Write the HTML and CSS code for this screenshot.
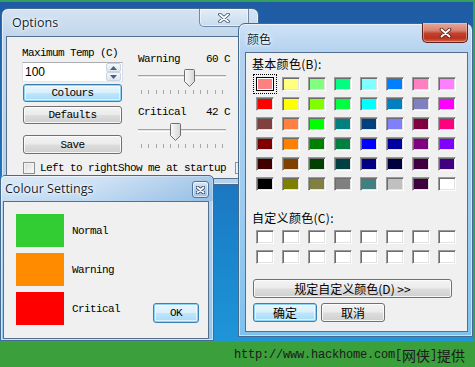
FILE: index.html
```html
<!DOCTYPE html>
<html>
<head>
<meta charset="utf-8">
<title>Options</title>
<link rel="stylesheet" href="styles.css">
</head>
<body>
<div class="screen">
  <div class="desk">

    <section class="win win-options">
      <header class="titlebar tb-options">
        <span class="title">Options</span>
        <span class="close close-inactive">
          <svg width="12" height="10" viewBox="0 0 12 10"><path d="M2,1.5 L10,8.5 M10,1.5 L2,8.5" class="x-out"/><path d="M2,1.5 L10,8.5 M10,1.5 L2,8.5" class="x-in"/></svg>
        </span>
      </header>
      <div class="client opt-client">
        <div class="opt-left">
          <div class="mono lbl">Maximum Temp (C)</div>
          <div class="spin">
            <span class="spin-val">100</span>
            <span class="spin-btns">
              <span class="spin-b"><svg width="7" height="4" viewBox="0 0 7 4"><path d="M0,4 L3.5,0 L7,4 Z" fill="#4b5f82"/></svg></span>
              <span class="spin-b"><svg width="7" height="4" viewBox="0 0 7 4"><path d="M0,0 L3.5,4 L7,0 Z" fill="#4b5f82"/></svg></span>
            </span>
          </div>
          <div class="btn btn-default mono b-colours">Colours</div>
          <div class="btn mono b-defaults">Defaults</div>
          <div class="btn mono b-save">Save</div>
        </div>
        <div class="opt-right">
          <div class="sl-head mono h-warn"><span>Warning</span><span>60 C</span></div>
          <div class="slider s-warn">
            <div class="track"></div>
            <svg class="thumb" style="left:46px" width="11" height="18" viewBox="0 0 11 18"><defs><linearGradient id="tg1" x1="0" y1="0" x2="1" y2="0"><stop offset="0" stop-color="#fbfbfb"/><stop offset="1" stop-color="#d6d6d6"/></linearGradient></defs><path d="M0.5,1.5 Q0.5,0.5 1.5,0.5 H9.5 Q10.5,0.5 10.5,1.5 V12.5 L5.5,17.5 L0.5,12.5 Z" fill="url(#tg1)" stroke="#6f6f6f"/></svg>
            <div class="ticks"><i></i><i></i><i></i><i></i><i></i><i></i><i></i><i></i><i></i><i></i><i></i><i></i></div>
          </div>
          <div class="sl-head mono h-crit"><span>Critical</span><span>42 C</span></div>
          <div class="slider s-crit">
            <div class="track"></div>
            <svg class="thumb" style="left:32px" width="11" height="18" viewBox="0 0 11 18"><defs><linearGradient id="tg2" x1="0" y1="0" x2="1" y2="0"><stop offset="0" stop-color="#fbfbfb"/><stop offset="1" stop-color="#d6d6d6"/></linearGradient></defs><path d="M0.5,1.5 Q0.5,0.5 1.5,0.5 H9.5 Q10.5,0.5 10.5,1.5 V12.5 L5.5,17.5 L0.5,12.5 Z" fill="url(#tg2)" stroke="#6f6f6f"/></svg>
            <div class="ticks"><i></i><i></i><i></i><i></i><i></i><i></i><i></i><i></i><i></i><i></i><i></i><i></i></div>
          </div>
        </div>
        <div class="chk-row">
          <span class="chk"></span>
          <span class="mono chk-text">Left to rightShow me at startup</span>
          <span class="chk chk2"></span>
        </div>
      </div>
    </section>

    <section class="win win-cs">
      <header class="titlebar tb-cs">
        <span class="title">Colour Settings</span>
        <span class="close close-small">
          <svg width="9" height="8" viewBox="0 0 9 8"><path d="M1.5,1.5 L7.5,6.5 M7.5,1.5 L1.5,6.5" class="x-out"/><path d="M1.5,1.5 L7.5,6.5 M7.5,1.5 L1.5,6.5" class="x-in"/></svg>
        </span>
      </header>
      <div class="client cs-client">
        <div class="cs-list">
          <div class="cs-row"><span class="cs-sw" style="background:#32cd32"></span><span class="mono">Normal</span></div>
          <div class="cs-row"><span class="cs-sw" style="background:#ff8c00"></span><span class="mono">Warning</span></div>
          <div class="cs-row"><span class="cs-sw" style="background:#ff0000"></span><span class="mono">Critical</span></div>
        </div>
        <div class="btn btn-default mono b-ok">OK</div>
      </div>
    </section>

    <section class="win win-dlg">
      <header class="titlebar tb-dlg">
        <span class="title cjk-title">颜色</span>
        <span class="close close-red">
          <svg width="13" height="10" viewBox="0 0 13 10"><path d="M2.5,1.5 L10.5,8.5 M10.5,1.5 L2.5,8.5" class="x-out x-out-red"/><path d="M2.5,1.5 L10.5,8.5 M10.5,1.5 L2.5,8.5" class="x-in"/></svg>
        </span>
      </header>
      <div class="client dlg-client">
        <div class="cjk dlg-lbl">基本颜色(<u>B</u>):</div>
        <div class="sw-grid">
          <span class="sw sel" style="background:#ff8080"></span>
          <span class="sw" style="background:#ffff80"></span>
          <span class="sw" style="background:#80ff80"></span>
          <span class="sw" style="background:#00ff80"></span>
          <span class="sw" style="background:#80ffff"></span>
          <span class="sw" style="background:#0080ff"></span>
          <span class="sw" style="background:#ff80c0"></span>
          <span class="sw" style="background:#ff80ff"></span>

          <span class="sw" style="background:#ff0000"></span>
          <span class="sw" style="background:#ffff00"></span>
          <span class="sw" style="background:#80ff00"></span>
          <span class="sw" style="background:#00ff40"></span>
          <span class="sw" style="background:#00ffff"></span>
          <span class="sw" style="background:#0080c0"></span>
          <span class="sw" style="background:#8080c0"></span>
          <span class="sw" style="background:#ff00ff"></span>

          <span class="sw" style="background:#804040"></span>
          <span class="sw" style="background:#ff8040"></span>
          <span class="sw" style="background:#00ff00"></span>
          <span class="sw" style="background:#008080"></span>
          <span class="sw" style="background:#004080"></span>
          <span class="sw" style="background:#8080ff"></span>
          <span class="sw" style="background:#800040"></span>
          <span class="sw" style="background:#ff0080"></span>

          <span class="sw" style="background:#800000"></span>
          <span class="sw" style="background:#ff8000"></span>
          <span class="sw" style="background:#008000"></span>
          <span class="sw" style="background:#008040"></span>
          <span class="sw" style="background:#0000ff"></span>
          <span class="sw" style="background:#0000a0"></span>
          <span class="sw" style="background:#800080"></span>
          <span class="sw" style="background:#8000ff"></span>

          <span class="sw" style="background:#400000"></span>
          <span class="sw" style="background:#804000"></span>
          <span class="sw" style="background:#004000"></span>
          <span class="sw" style="background:#004040"></span>
          <span class="sw" style="background:#000080"></span>
          <span class="sw" style="background:#000040"></span>
          <span class="sw" style="background:#400040"></span>
          <span class="sw" style="background:#400080"></span>

          <span class="sw" style="background:#000000"></span>
          <span class="sw" style="background:#808000"></span>
          <span class="sw" style="background:#808040"></span>
          <span class="sw" style="background:#808080"></span>
          <span class="sw" style="background:#408080"></span>
          <span class="sw" style="background:#c0c0c0"></span>
          <span class="sw" style="background:#400040"></span>
          <span class="sw" style="background:#ffffff"></span>
        </div>
        <div class="cjk dlg-lbl lbl2">自定义颜色(<u>C</u>):</div>
        <div class="sw-grid grid2">
          <span class="sw wh"></span><span class="sw wh"></span><span class="sw wh"></span><span class="sw wh"></span>
          <span class="sw wh"></span><span class="sw wh"></span><span class="sw wh"></span><span class="sw wh"></span>
          <span class="sw wh"></span><span class="sw wh"></span><span class="sw wh"></span><span class="sw wh"></span>
          <span class="sw wh"></span><span class="sw wh"></span><span class="sw wh"></span><span class="sw wh"></span>
        </div>
        <div class="btn cjk b-define">规定自定义颜色(<u>D</u>) &gt;&gt;</div>
        <div class="dlg-btns">
          <div class="btn btn-default cjk b-small">确定</div>
          <div class="btn cjk b-small">取消</div>
        </div>
      </div>
    </section>

  </div>
  <footer class="footer"><span class="wm-a">http://www.hackhome.com[</span><span class="wm-c">网侠</span><span class="wm-a">]</span><span class="wm-c">提供</span></footer>
</div>
</body>
</html>
```

FILE: styles.css
```css
* { box-sizing: border-box; }

body {
  margin: 0;
  width: 475px;
  height: 367px;
  overflow: hidden;
  font-family: "Open Sans", "Noto Sans", sans-serif;
  color: #000;
}

.screen {
  width: 475px;
  height: 367px;
  display: flex;
  flex-direction: column;
}

.desk {
  position: relative;
  height: 342px;
  overflow: hidden;
  background: linear-gradient(180deg, #1f5ba3 0%, #1d6db9 40%, #1a86cc 75%, #1f95d8 100%);
  box-shadow: inset 0 2px 0 #35a05e, inset -2px 0 0 #35a05e;
}

.footer {
  height: 25px;
  background: #3b9f3c;
  display: flex;
  justify-content: flex-end;
  align-items: center;
  padding-right: 10px;
  color: #1a1a1a;
}
.wm-a {
  font-family: "Liberation Mono", monospace;
  font-size: 12px;
  letter-spacing: -0.2px;
}
.wm-c {
  font-family: "Noto Sans CJK SC", sans-serif;
  font-size: 14px;
  line-height: 16px;
}

/* ---------- windows ---------- */
.win {
  position: absolute;
  display: flex;
  flex-direction: column;
  border: 1px solid #45698f;
  border-radius: 7px 7px 0 0;
  box-shadow: inset 0 0 0 1px rgba(255,255,255,0.55);
}

.win-options {
  left: 1px;
  top: 8px;
  width: 258px;
  height: 177px;
  padding: 0 5px 5px 4px;
  background: linear-gradient(180deg, #d4e3f2 0px, #c2d7ec 27px, #b8d0e9 100%);
}

.win-cs {
  left: 0;
  top: 175px;
  width: 214px;
  height: 166px;
  padding: 0 4px 3px 2px;
  border-radius: 5px 5px 0 0;
  background: linear-gradient(180deg, #cfe2f5 0px, #b5d3ef 24px, #93c6ee 100%);
}

.win-dlg {
  left: 238px;
  top: 23px;
  width: 235px;
  height: 314px;
  padding: 0 4px 4px 6px;
  background: linear-gradient(180deg, #cfe2f5 0px, #b4d2f0 28px, #9ccbef 60%, #7fc1ee 100%);
}

.titlebar {
  position: relative;
  display: flex;
  align-items: center;
  flex: none;
}
.tb-options { height: 27px; padding-left: 6px; }
.tb-cs {
  height: 25px;
  padding-left: 3px;
  margin: 0 -4px 0 -2px;
  padding-right: 4px;
  background: linear-gradient(90deg, rgba(255,255,255,0.25) 0%, rgba(255,255,255,0.1) 45%, rgba(60,130,200,0.25) 100%);
}
.tb-dlg { height: 28px; padding-left: 2px; }

.title {
  font-size: 12.5px;
  color: #0f1e30;
  text-shadow: 0 0 6px #fff, 0 0 3px #fff, 0 0 1px #fff;
  line-height: 16px;
}
.tb-cs .title { padding-left: 1px; }
.cjk-title {
  font-family: "Noto Sans CJK SC", sans-serif;
  font-size: 12px;
  padding-top: 2px;
}

.close {
  position: absolute;
  display: flex;
  align-items: center;
  justify-content: center;
}
.close-inactive {
  right: 4px;
  top: 0;
  width: 50px;
  height: 18px;
  border: 1px solid #6f8aa9;
  border-top: none;
  border-radius: 0 0 5px 5px;
  background: linear-gradient(180deg, rgba(255,255,255,0.35), rgba(200,220,240,0.3));
  box-shadow: inset 0 0 0 1px rgba(255,255,255,0.5);
}
.close-red {
  right: 0;
  top: -1px;
  width: 46px;
  height: 20px;
  border: 1px solid #5e2119;
  border-top: none;
  border-radius: 0 0 5px 5px;
  background: linear-gradient(180deg, #e7a99c 0%, #d8806f 40%, #c2412d 55%, #b9331f 80%, #d16445 100%);
  box-shadow: inset 0 0 0 1px rgba(255,210,200,0.45);
}
.close-small {
  right: 4px;
  top: 5px;
  width: 17px;
  height: 17px;
  border: 1px solid #50739b;
  border-radius: 3px;
  background: linear-gradient(180deg, #d9e9f8 0%, #b5d1ee 50%, #9dc1e6 100%);
  box-shadow: inset 0 0 0 1px rgba(255,255,255,0.6);
}
.x-out { stroke: #3d4e63; stroke-width: 3.6; stroke-linecap: round; fill: none; }
.x-out-red { stroke: #5a1c12; }
.x-in { stroke: #fff; stroke-width: 1.9; stroke-linecap: round; fill: none; }

.client {
  flex: 1;
  background: #f0f0f0;
  border: 1px solid #54708f;
}

/* ---------- text / controls ---------- */
.mono {
  font-family: "Liberation Mono", monospace;
  font-size: 11px;
  letter-spacing: -0.6px;
  line-height: 12px;
  color: #000;
}
.cjk {
  font-family: "Noto Sans CJK SC", sans-serif;
  font-size: 12px;
  color: #000;
}
.cjk u { text-decoration: none; }

.btn {
  display: flex;
  align-items: center;
  justify-content: center;
  border: 1px solid #707070;
  border-radius: 3px;
  background: linear-gradient(180deg, #f3f3f3 0%, #ebebeb 48%, #dddddd 52%, #cfcfcf 100%);
  box-shadow: inset 0 0 0 1px rgba(255,255,255,0.8);
}
.btn-default {
  border-color: #3c7fb1;
  box-shadow: inset 0 0 0 1px #8fd3f6, inset 0 0 0 2px rgba(255,255,255,0.6);
  background: linear-gradient(180deg, #eaf6fd 0%, #d9f0fc 48%, #bee6fd 52%, #a7d9f5 100%);
}

/* ---------- options ---------- */
.opt-client {
  display: grid;
  grid-template-columns: 101px 92px;
  grid-template-rows: auto auto;
  column-gap: 15px;
  align-content: start;
  padding: 10px 0 0 15px;
}
.opt-left { display: flex; flex-direction: column; }
.lbl { padding-left: 0; }
.spin {
  margin-top: 3px;
  height: 20px;
  width: 101px;
  display: flex;
  align-items: center;
  justify-content: space-between;
  background: #fff;
  border: 1px solid #abadb3;
  border-color: #abadb3 #dbdfe6 #e3e9ef #e2e3ea;
  padding: 0 1px 0 2px;
}
.spin-val {
  font-family: "Liberation Sans", sans-serif;
  font-size: 12px;
}
.spin-btns { display: flex; flex-direction: column; gap: 0; }
.spin-b {
  width: 15px;
  height: 9px;
  display: flex;
  align-items: center;
  justify-content: center;
  border: 1px solid #c9d3e2;
  border-radius: 2px;
  background: linear-gradient(180deg, #f6f8fb, #dfe6ef);
}
.opt-left .btn { margin: 0 1px; }
.b-colours { margin-top: 2px !important; height: 18px; }
.b-defaults { margin-top: 4px !important; height: 18px; }
.b-save { margin-top: 11px !important; height: 19px; }

.opt-right { display: flex; flex-direction: column; }
.sl-head { display: flex; justify-content: space-between; }
.h-warn { margin-top: 6px; }
.h-crit { margin-top: 9px; }
.slider {
  position: relative;
  height: 28px;
  width: 88px;
  margin-top: 4px;
}
.s-crit { margin-top: 5px; }
.track {
  position: absolute;
  left: 0;
  right: 0;
  top: 6px;
  height: 3px;
  border-top: 1px solid #a3a3a3;
  border-bottom: 1px solid #fff;
  background: #e3e3e3;
}
.thumb { position: absolute; top: 0; }
.s-crit .thumb { top: 0; }
.ticks {
  position: absolute;
  left: 3px;
  right: 3px;
  top: 21px;
  height: 4px;
  display: flex;
  justify-content: space-between;
}
.ticks i {
  width: 1px;
  height: 4px;
  background: #a8a8a8;
}

.chk-row {
  grid-column: 1 / -1;
  display: flex;
  align-items: center;
  margin-top: 8px;
  padding-left: 1px;
}
.chk {
  width: 12px;
  height: 12px;
  border: 1px solid #8e8f8f;
  background: linear-gradient(135deg, #dcdcdc, #fbfbfb);
  box-shadow: inset 0 0 0 1px #f4f4f4;
  flex: none;
}
.chk-text { margin-left: 5px; white-space: nowrap; }
.chk2 { margin-left: 9px; }

/* ---------- colour settings ---------- */
.cs-client {
  display: flex;
  align-items: flex-end;
  padding: 12px 9px 13px 12px;
}
.cs-list { display: flex; flex-direction: column; gap: 6px; }
.cs-row { display: flex; align-items: center; gap: 8px; }
.cs-sw { width: 48px; height: 33px; }
.b-ok {
  margin-left: auto;
  margin-bottom: 2px;
  width: 46px;
  height: 20px;
}

/* ---------- colour dialog ---------- */
.dlg-client {
  display: flex;
  flex-direction: column;
  padding: 3px 0 0 6px;
}
.dlg-lbl { line-height: 16px; height: 16px; letter-spacing: 0.3px; }
.lbl2 { margin-top: 19px; }
.sw-grid {
  display: grid;
  grid-template-columns: repeat(8, 18px);
  grid-auto-rows: 14px;
  column-gap: 8px;
  row-gap: 6px;
  margin: 5px 0 0 4px;
}
.grid2 { margin-top: 4px; }
.sw {
  border: 1px solid;
  border-color: #9a9a9a #ffffff #ffffff #9a9a9a;
  box-shadow: inset 1px 1px 0 #6d6d6d, inset -1px -1px 0 #e3e3e3;
}
.sw.wh { background: #fff; }
.sw.sel {
  border-color: #000;
  box-shadow: inset 0 0 0 1px #fff;
  outline: 1px dotted #000;
  outline-offset: 2px;
}
.b-define {
  margin: 15px 0 0 1px;
  width: 199px;
  height: 19px;
}
.dlg-btns {
  display: flex;
  gap: 4px;
  margin: 5px 0 0 1px;
}
.b-small { width: 64px; height: 19px; }
```
